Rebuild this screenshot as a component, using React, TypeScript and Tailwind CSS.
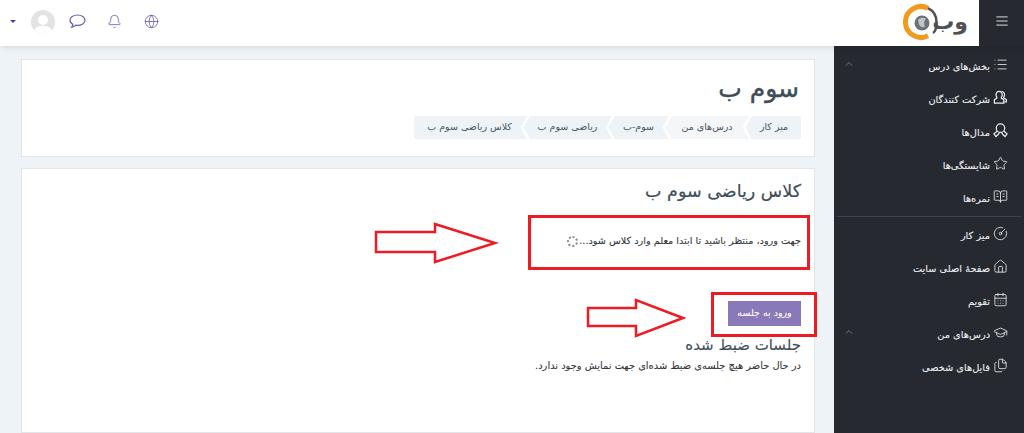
import React from 'react';
import {
  AlignJustify,
  Bell,
  BookOpenText,
  CalendarDays,
  ChevronUp,
  CircleGauge,
  Files,
  Globe,
  GraduationCap,
  House,
  List,
  Star,
} from 'lucide-react';

type IconProps = { size?: number; strokeWidth?: number; className?: string };

const PeopleIcon = ({ size = 15, strokeWidth = 1.2, className }: IconProps) => (
  <svg width={size} height={size} viewBox="0 0 16 16" fill="none" stroke="currentColor" strokeWidth={strokeWidth} className={className}>
    <path d="M6.5 1.5a3.3 3.3 0 0 1 3.3 3.4c0 1.8-1 2.6-1 3.8l2.7 1.6v3.7H1.5v-3.7l2.7-1.6c0-1.2-1-2-1-3.8a3.3 3.3 0 0 1 3.3-3.4Z" />
    <path d="M9 1.6a3.3 3.3 0 0 1 3.3 3.4c0 1.6-.8 2.4-.9 3.5l2.9 1.7v2.6h-2.5" />
  </svg>
);

const MedalIcon = ({ size = 15, strokeWidth = 1.2, className }: IconProps) => (
  <svg width={size} height={size} viewBox="0 0 16 16" fill="none" stroke="currentColor" strokeWidth={strokeWidth} className={className}>
    <circle cx="8" cy="5.5" r="4.5" />
    <path d="M4.6 8.5 1 11.5l2.2 3 2.5-2.5L7 9.9M11.4 8.5l3.6 3-2.2 3-2.5-2.5L9 9.9" />
  </svg>
);

const topItems = [
  { label: 'بخش‌های درس', icon: List, more: true },
  { label: 'شرکت کنندگان', icon: PeopleIcon },
  { label: 'مدال‌ها', icon: MedalIcon },
  { label: 'شایستگی‌ها', icon: Star },
  { label: 'نمره‌ها', icon: BookOpenText },
];

const bottomItems = [
  { label: 'میز کار', icon: CircleGauge },
  { label: 'صفحهٔ اصلی سایت', icon: House },
  { label: 'تقویم', icon: CalendarDays },
  { label: 'درس‌های من', icon: GraduationCap, more: true },
  { label: 'فایل‌های شخصی', icon: Files },
];

const crumbs = [
  { label: 'میز کار', active: false, width: 'w-[54px]' },
  { label: 'درس‌های من', active: true, width: 'w-[80px]' },
  { label: 'سوم-ب', active: false, width: 'w-[57px]' },
  { label: 'ریاضی سوم ب', active: false, width: 'w-[85px]' },
  { label: 'کلاس ریاضی سوم ب', active: false, width: 'w-[111px]' },
];

type Item = { label: string; icon: React.ElementType; more?: boolean };

const SideRow = ({ item }: { item: Item }) => {
  const Icon = item.icon;
  return (
    <div className="flex h-[33px] items-center gap-[3px] pr-[16px] pl-[9px] text-[9.8px] text-[#eceef0] [-webkit-text-stroke:0.1px_#eceef0]">
      <Icon size={15} strokeWidth={1.3} className="shrink-0 -translate-y-[1px] text-[#eef0f2]" />
      <span className="translate-y-[2px] whitespace-nowrap">{item.label}</span>
      {item.more && <ChevronUp size={12} strokeWidth={1.2} className="mr-auto -translate-y-[2px] text-[#9aa0a6]" />}
    </div>
  );
};

const Logo = () => (
  <div className="relative h-[40px] w-[64px]">
    <svg width="40" height="40" viewBox="0 0 40 40" className="absolute top-[-1px] left-0">
      <path d="M25 6.2 A15.5 15.5 0 1 0 25 33.8" fill="none" stroke="#f29a1f" strokeWidth="5" />
      <path d="M25 6.2 A15.5 15.5 0 0 1 33.5 20 Q33.5 29 30 31" fill="none" stroke="#505155" strokeWidth="2.5" />
      <circle cx="19" cy="21" r="7.5" fill="#6d7276" />
      <path d="M15 17.5 Q19 14.5 23 16.5 Q20 20.5 22 24.5 Q18 26.5 16 22.5Z" fill="#c2c5c8" />
    </svg>
    <span className="absolute top-[-3px] right-[-1px] text-[22px] leading-[44px] font-bold text-[#505155]">وب</span>
  </div>
);

const Crumb = ({ label, active, last, width }: { label: string; active: boolean; last: boolean; width: string }) => (
  <div
    className={`relative flex h-[23px] items-center justify-center text-[9.5px] text-[#4a5560] ${width} ${
      active ? 'bg-[#f5f6f7]' : 'bg-[#edf3f7]'
    }`}>
    <span className="whitespace-nowrap">{label}</span>
    {!last && (
      <svg width="11" height="23" viewBox="0 0 11 23" className="absolute top-0 left-[-5px] z-10">
        <path d="M9 -1 L2 11.5 L9 24" fill="none" stroke="#ffffff" strokeWidth="2.5" />
      </svg>
    )}
  </div>
);

const App = () => {
  return (
    <div
      dir="rtl"
      className="relative flex h-[433px] w-[1024px] flex-col overflow-hidden bg-[#edf3f7] font-['DejaVu_Sans',sans-serif]">
      <header className="z-10 flex h-[46px] items-stretch bg-white shadow-[0_1px_6px_rgba(0,0,0,0.12)]">
        <div className="flex w-[45px] items-center justify-center bg-[#262a30]">
          <AlignJustify size={14} strokeWidth={1.6} className="-translate-y-[2px] text-[#e6e8ea]" />
        </div>
        <div className="flex items-center pr-[12px]">
          <Logo />
        </div>
        <div className="mr-auto flex items-center pb-[3px] pl-[10px] text-[#6a5db0]">
          <Globe size={15} strokeWidth={1.3} />
          <Bell size={15} strokeWidth={1.3} className="mr-[22px]" />
          <svg width="17" height="15" viewBox="0 0 17 15" fill="none" stroke="currentColor" strokeWidth="1.2" className="mr-[21px]">
            <path d="M8.5 1C4.4 1 1 3.3 1 6.3c0 1.7 1.1 3.2 2.9 4.1-.1 1-.6 2-1.2 2.8 1.5-.2 3-1 4-2 .6.1 1.2.2 1.8.2 4.1 0 7.5-2.3 7.5-5.1S12.6 1 8.5 1Z" />
          </svg>
          <div className="relative mr-[14px] h-[24px] w-[24px] overflow-hidden rounded-full bg-[#e3e3e3]">
            <div className="absolute top-[5px] left-[7px] h-[10px] w-[10px] rounded-full bg-white" />
            <div className="absolute top-[16px] left-[3px] h-[12px] w-[18px] rounded-full bg-white" />
          </div>
          <div className="mr-[15px] h-0 w-0 border-x-[3px] border-t-[3px] border-x-transparent border-t-[#4b3fa0]" />
        </div>
      </header>

      <div className="flex min-h-0 flex-1">
        <aside className="w-[190px] shrink-0 bg-[#262a30] pt-[3px]">
          {topItems.map((item) => (
            <SideRow key={item.label} item={item} />
          ))}
          <div className="mx-[3px] mt-[2px] mb-[1px] h-[1px] bg-[#3a444d]" />
          {bottomItems.map((item) => (
            <SideRow key={item.label} item={item} />
          ))}
        </aside>

        <main className="flex min-w-0 flex-1 flex-col gap-[11px] pt-[13px] pr-[19px] pl-[21px]">
          <section className="h-[98px] shrink-0 border border-[#e2e6e9] bg-white pt-[14px] pr-[13px]">
            <h1 className="pr-[2px] text-[25px] leading-[30px] font-medium text-[#3d4d59] [-webkit-text-stroke:0.4px_#3d4d59]">سوم ب</h1>
            <div className="mt-[12px] flex w-fit overflow-hidden rounded-[2px]">
              {crumbs.map((crumb, i) => (
                <Crumb key={crumb.label} {...crumb} last={i === crumbs.length - 1} />
              ))}
            </div>
          </section>

          <section className="flex-1 border border-[#e2e6e9] bg-white pt-[10px] pr-[13px]">
            <h2 className="text-[17.5px] leading-[24px] font-medium text-[#3d4d59] [-webkit-text-stroke:0.2px_#3d4d59]">کلاس ریاضی سوم ب</h2>
            <div className="mt-[30px] flex items-center gap-[1px] text-[9.7px] leading-[16px] text-[#2f3438] [-webkit-text-stroke:0.08px_#2f3438]">
              <span>جهت ورود، منتظر باشید تا ابتدا معلم وارد کلاس شود...</span>
              <span className="h-[11px] w-[11px] rounded-full border-2 border-dotted border-[#8a8a8a]" />
            </div>
            <button className="mt-[52px] flex h-[25px] w-[73px] items-center justify-center bg-[#8a79b9] text-[9.5px] font-medium text-white [-webkit-text-stroke:0.1px_#ffffff]">
              ورود به جلسه
            </button>
            <h3 className="mt-[9px] text-[15px] leading-[20px] font-medium text-[#3d4d59] [-webkit-text-stroke:0.1px_#3d4d59]">جلسات ضبط شده</h3>
            <p className="mt-[3px] text-[9.9px] leading-[16px] text-[#2f3438] [-webkit-text-stroke:0.08px_#2f3438]">
              در حال حاضر هیچ جلسه‌ی ضبط شده‌ای جهت نمایش وجود ندارد.
            </p>
          </section>
        </main>
      </div>

      {/* annotations drawn over the screenshot */}
      <div className="absolute top-[215px] left-[528px] h-[55px] w-[282px] border-[3px] border-[#ed1c24]" />
      <div className="absolute top-[292px] left-[711px] h-[45px] w-[106px] border-[3px] border-[#ed1c24]" />
      <svg width="126" height="44" viewBox="0 0 126 44" className="absolute top-[221px] left-[374px]">
        <path d="M2 11 H61 V3 L121 22 L61 41 V31 H2Z" fill="none" stroke="#ed1c24" strokeWidth="2.5" />
      </svg>
      <svg width="100" height="40" viewBox="0 0 100 40" className="absolute top-[298px] left-[586px]">
        <path d="M2 10 H50 V2 L97 20 L50 38 V28 H2Z" fill="none" stroke="#ed1c24" strokeWidth="2.5" />
      </svg>
    </div>
  );
};

export default App;
